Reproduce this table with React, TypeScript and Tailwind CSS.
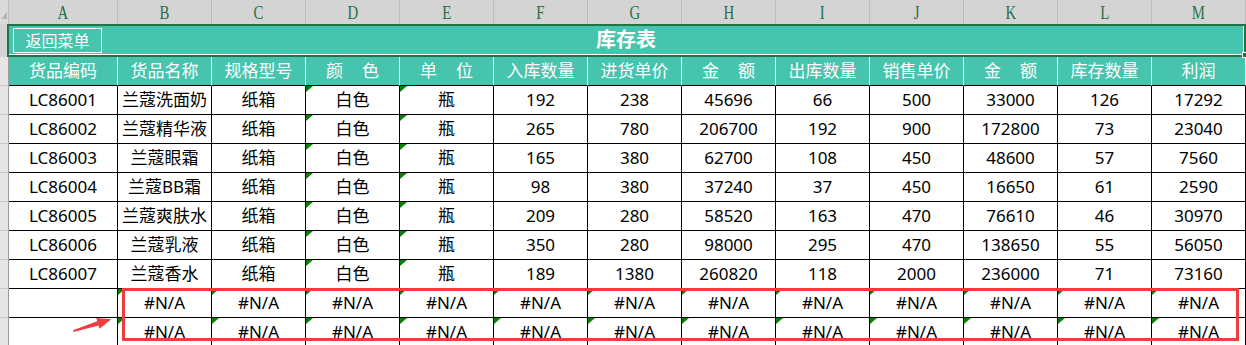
import React from "react";

interface StockRow {
  code: string;
  name: string;
  spec: string;
  color: string;
  unit: string;
  inQty: number;
  inPrice: number;
  inAmount: number;
  outQty: number;
  outPrice: number;
  outAmount: number;
  stock: number;
  profit: number;
}

const letters = ["A", "B", "C", "D", "E", "F", "G", "H", "I", "J", "K", "L", "M"];

const headers: string[][] = [
  ["货品编码"],
  ["货品名称"],
  ["规格型号"],
  ["颜", "色"],
  ["单", "位"],
  ["入库数量"],
  ["进货单价"],
  ["金", "额"],
  ["出库数量"],
  ["销售单价"],
  ["金", "额"],
  ["库存数量"],
  ["利润"],
];

const rows: StockRow[] = [
  { code: "LC86001", name: "兰蔻洗面奶", spec: "纸箱", color: "白色", unit: "瓶", inQty: 192, inPrice: 238, inAmount: 45696, outQty: 66, outPrice: 500, outAmount: 33000, stock: 126, profit: 17292 },
  { code: "LC86002", name: "兰蔻精华液", spec: "纸箱", color: "白色", unit: "瓶", inQty: 265, inPrice: 780, inAmount: 206700, outQty: 192, outPrice: 900, outAmount: 172800, stock: 73, profit: 23040 },
  { code: "LC86003", name: "兰蔻眼霜", spec: "纸箱", color: "白色", unit: "瓶", inQty: 165, inPrice: 380, inAmount: 62700, outQty: 108, outPrice: 450, outAmount: 48600, stock: 57, profit: 7560 },
  { code: "LC86004", name: "兰蔻BB霜", spec: "纸箱", color: "白色", unit: "瓶", inQty: 98, inPrice: 380, inAmount: 37240, outQty: 37, outPrice: 450, outAmount: 16650, stock: 61, profit: 2590 },
  { code: "LC86005", name: "兰蔻爽肤水", spec: "纸箱", color: "白色", unit: "瓶", inQty: 209, inPrice: 280, inAmount: 58520, outQty: 163, outPrice: 470, outAmount: 76610, stock: 46, profit: 30970 },
  { code: "LC86006", name: "兰蔻乳液", spec: "纸箱", color: "白色", unit: "瓶", inQty: 350, inPrice: 280, inAmount: 98000, outQty: 295, outPrice: 470, outAmount: 138650, stock: 55, profit: 56050 },
  { code: "LC86007", name: "兰蔻香水", spec: "纸箱", color: "白色", unit: "瓶", inQty: 189, inPrice: 1380, inAmount: 260820, outQty: 118, outPrice: 2000, outAmount: 236000, stock: 71, profit: 73160 },
];

function Flag() {
  return (
    <span className="absolute left-0 top-0 w-[7px] h-[6px] bg-[#0a800a] [clip-path:polygon(0_0,100%_0,0_100%)]" />
  );
}

function Cell({ index, children, flag }: { index: number; children?: React.ReactNode; flag?: boolean }) {
  return (
    <div
      className={`relative flex items-center justify-center h-full border-r border-b border-black bg-white text-[17px] text-black ${
        index === 0 ? "w-[109px]" : "w-[94px]"
      }`}
    >
      {flag && <Flag />}
      {children}
    </div>
  );
}

function RowHead() {
  return <div className="w-[9px] h-full bg-[#e6e6e6] border-r border-b border-r-[#9b9b9b] border-b-[#c9c9c9]" />;
}

export default function App() {
  return (
    <div
      className="relative w-[1246px] h-[345px] overflow-hidden bg-white"
      style={{ fontFamily: '"Noto Sans", "Noto Sans CJK SC", sans-serif' }}
    >
      {/* column letters */}
      <div className="flex h-[24px]">
        <div className="relative w-[9px] h-full bg-[#dadada] border-r border-[#bcbcbc]">
          <span className="absolute right-[1px] bottom-[5px] w-[6px] h-[7px] bg-[#b4b4b4] [clip-path:polygon(100%_0,100%_100%,0_100%)]" />
        </div>
        {letters.map((l, i) => (
          <div
            key={l}
            className={`flex items-center justify-center h-full bg-[#d4d4d4] border-r border-[#bdbdbd] text-[#2a6e47] text-[19px] leading-none ${
              i === 0 ? "w-[109px]" : "w-[94px]"
            }`}
            style={{ fontFamily: '"Liberation Serif", serif' }}
          >
            <span className="inline-block scale-x-[0.78] pt-[1px]">{l}</span>
          </div>
        ))}
      </div>

      {/* title row */}
      <div className="flex h-[33px]">
        <div className="w-[7px] h-full bg-[#d4d4d4]" />
        <div className="relative w-[1239px] h-full border-2 border-[#217346] bg-[#46c4ad]">
          <div className="flex items-center justify-center h-full border-r border-b border-white">
            <span className="text-[20px] font-bold text-white leading-none">库存表</span>
          </div>
          <button className="absolute left-[4px] top-[2px] w-[89px] h-[25px] border border-white text-white text-[16px] leading-none flex items-center justify-center">
            返回菜单
          </button>
          <span className="absolute right-[-3px] bottom-[-3px] w-[5px] h-[6px] bg-[#217346] border border-white" />
        </div>
      </div>

      {/* header row */}
      <div className="flex h-[29px]">
        <RowHead />
        {headers.map((h, i) => (
          <div
            key={i}
            className={`flex items-center justify-center gap-[19px] h-full bg-[#46c4ad] border-r border-b border-r-white border-b-black text-white text-[17px] ${
              i === 0 ? "w-[109px]" : "w-[94px]"
            }`}
          >
            {h.map((t) => (
              <span key={t}>{t}</span>
            ))}
          </div>
        ))}
      </div>

      {rows.map((r) => (
        <div key={r.code} className="flex h-[29px]">
          <RowHead />
          <Cell index={0}>{r.code}</Cell>
          <Cell index={1}>{r.name}</Cell>
          <Cell index={2}>{r.spec}</Cell>
          <Cell index={3} flag>{r.color}</Cell>
          <Cell index={4} flag>{r.unit}</Cell>
          <Cell index={5}>{r.inQty}</Cell>
          <Cell index={6}>{r.inPrice}</Cell>
          <Cell index={7}>{r.inAmount}</Cell>
          <Cell index={8}>{r.outQty}</Cell>
          <Cell index={9}>{r.outPrice}</Cell>
          <Cell index={10}>{r.outAmount}</Cell>
          <Cell index={11}>{r.stock}</Cell>
          <Cell index={12}>{r.profit}</Cell>
        </div>
      ))}

      {/* lookup rows with no match */}
      {[0, 1].map((n) => (
        <div key={n} className="flex h-[29px]">
          <RowHead />
          <Cell index={0} />
          {letters.slice(1).map((l, i) => (
            <Cell key={l} index={i + 1} flag>
              #N/A
            </Cell>
          ))}
        </div>
      ))}

      {/* annotation */}
      <div className="absolute left-[122px] top-[288px] w-[1117px] h-[53px] border-[3px] border-[#f03c3c]" />
      <svg className="absolute left-[70px] top-[314px]" width="46" height="20" viewBox="0 0 46 20">
        <polygon
          points="3,16.3 27.25,7.3 26.3,4.1 41.3,5.3 29.5,14.7 28.5,11.5 3.4,18"
          fill="#f03c3c"
        />
      </svg>
    </div>
  );
}
